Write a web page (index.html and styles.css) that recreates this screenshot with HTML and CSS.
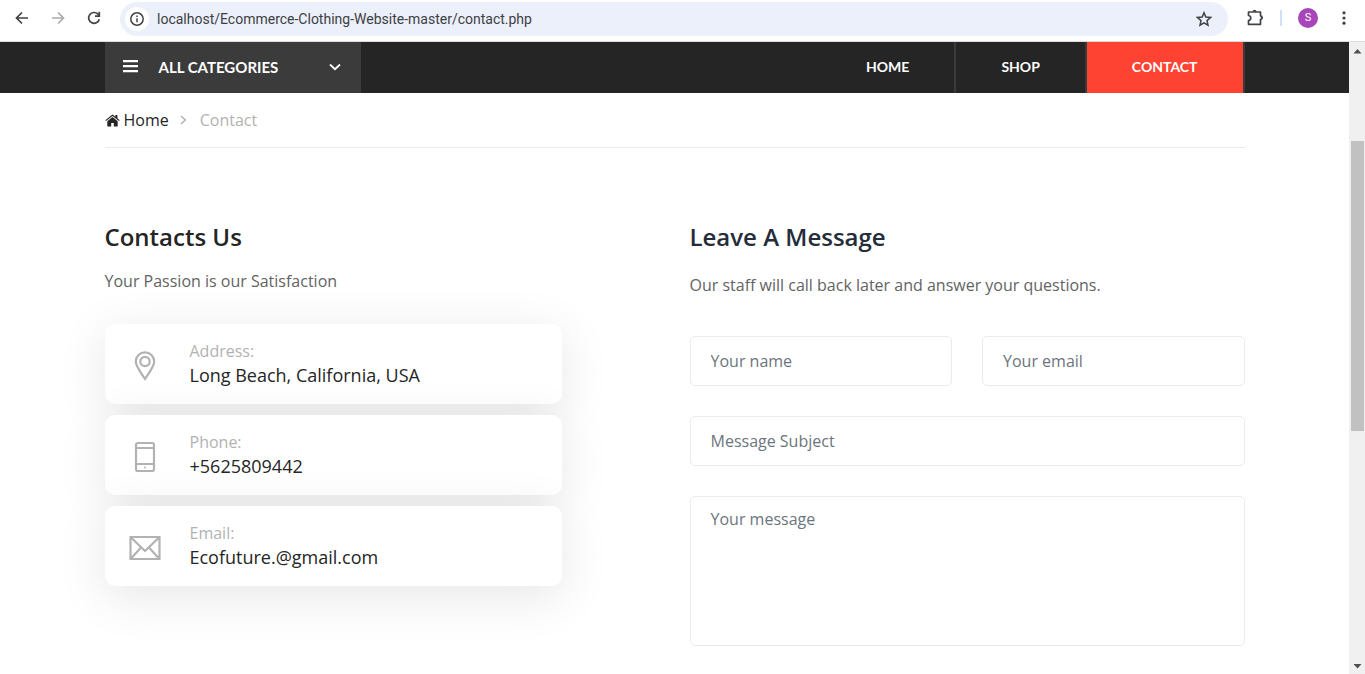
FILE: index.html
```html
<!DOCTYPE html>
<html lang="en">
<head>
<meta charset="utf-8">
<meta name="viewport" content="width=device-width, initial-scale=1">
<title>Contact</title>
<link rel="stylesheet" href="styles.css">
</head>
<body>
<div class="toolbar">
  <button class="tool back" type="button" aria-label="Back"><svg width="16" height="16" viewBox="0 0 16 16" fill="none" stroke="#404346" stroke-width="1.7"><path d="M14 8H3M8 2.5 2.5 8 8 13.5"/></svg></button>
  <button class="tool" type="button" aria-label="Forward"><svg width="16" height="16" viewBox="0 0 16 16" fill="none" stroke="#a9abae" stroke-width="1.7"><path d="M2 8h11M8 2.5 13.500 8 8 13.500"/></svg></button>
  <button class="tool" type="button" aria-label="Reload"><svg width="16" height="16" viewBox="0 0 16 16" fill="none" stroke="#404346" stroke-width="1.7"><path d="M13.300 9.200a5.400 5.400 0 1 1-1.300-5L13 5.300"/><path d="M13.300 1.800v4.300H9"/></svg></button>
  <div class="omnibox">
    <button class="site-info" type="button" aria-label="Site information"><svg width="16" height="16" viewBox="0 0 16 16" fill="none" stroke="#404346" stroke-width="1.5"><circle cx="8" cy="8" r="6.200"/><path d="M8 7.200v4M8 4.600v1.500"/></svg></button>
    <input class="url" type="text" aria-label="Address bar" value="localhost/Ecommerce-Clothing-Website-master/contact.php">
    <button class="tool star" type="button" aria-label="Bookmark"><svg width="16" height="16" viewBox="0 0 16 16" fill="none" stroke="#404346" stroke-width="1.5"><path d="m8 1.800 1.800 4.300 4.700.4-3.500 3.100 1 4.600L8 11.800l-4 2.400 1-4.600L1.500 6.500l4.700-.4z"/></svg></button>
  </div>
  <button class="tool puzzle" type="button" aria-label="Extensions"><svg width="18" height="18" viewBox="0 0 18 18"><path d="M2.500 3h12v3.800c2.200.3 2.200 3.400 0 3.700v4.800h-12v-3.600c3-.5 3-4.700 0-5.200z" fill="none" stroke="#404346" stroke-width="1.700" stroke-linejoin="round"/><path d="M6.700 2.700a1.900 1.900 0 0 1 3.800 0zM14.800 6.900a1.800 1.800 0 0 1 0 3.500z" fill="#404346"/></svg></button>
  <span class="divider"></span>
  <button class="avatar" type="button" aria-label="Profile">S</button>
  <button class="tool more" type="button" aria-label="Menu"><svg width="16" height="16" viewBox="0 0 16 16" fill="#404346"><circle cx="8" cy="2.800" r="1.600"/><circle cx="8" cy="8" r="1.600"/><circle cx="8" cy="13.200" r="1.600"/></svg></button>
</div>
<div class="viewport">
  <div class="page">
    <header class="nav">
      <div class="container nav-row">
        <button class="categories" type="button">
          <svg width="16" height="13" viewBox="0 0 16 13" fill="#fff"><path d="M0 0h15v2.300H0zM0 5h15v2.300H0zM0 10h15v2.300H0z"/></svg>
          <span class="cat-label">All categories</span>
          <svg width="12" height="8" viewBox="0 0 12 8" fill="none" stroke="#fff" stroke-width="1.800"><path d="m1 1.500 5 4.700 5-4.700"/></svg>
        </button>
        <nav class="menu">
          <a class="link" href="#">Home</a>
          <a class="link" href="#">Shop</a>
          <a class="link active" href="#">Contact</a>
        </nav>
      </div>
    </header>
    <div class="container">
      <div class="crumbs">
        <a class="crumb-home" href="#"><svg width="15" height="13" viewBox="0 0 15 13" fill="#252525"><path d="M7.500 3 2.300 7.300V12c0 .4.200.6.600.6h3.300V9h2.600v3.600h3.300c.4 0 .600-.2.600-.6V7.300z"/><path d="m.3 6.300 6.500-5.400a1.100 1.100 0 0 1 1.400 0l2.200 1.800V1h2v3.300l2.300 2-.7.800L7.500 1.900 1 7.100z"/></svg>Home</a>
        <svg width="7" height="10" viewBox="0 0 7 10" fill="none" stroke="#b2b2b2" stroke-width="1.500"><path d="m1 1 4.300 4L1 9"/></svg>
        <span>Contact</span>
      </div>
    </div>
    <main class="container columns">
      <section class="contacts">
        <h1 class="title">Contacts Us</h1>
        <p class="lead">Your Passion is our Satisfaction</p>
        <div class="cards">
          <div class="card">
            <svg width="32" height="32" viewBox="0 0 32 32" fill="none" stroke="#b2b2b2" stroke-width="2.200"><path d="M16 29C12.500 23.300 6.800 16.800 6.800 11.500a9.200 9.200 0 0 1 18.400 0c0 5.300-5.700 11.800-9.200 17.500z"/><circle cx="16" cy="11.500" r="4.700"/></svg>
            <div class="card-text"><span class="label">Address:</span><p class="value">Long Beach, California, USA</p></div>
          </div>
          <div class="card">
            <svg width="32" height="32" viewBox="0 0 32 32" fill="none" stroke="#b2b2b2" stroke-width="2.200"><rect x="7" y="2" width="18" height="28" rx="2"/><path d="M7 7h18M7 23h18"/><circle cx="16" cy="26.500" r="1" fill="#b2b2b2" stroke="none"/></svg>
            <div class="card-text"><span class="label">Phone:</span><p class="value">+5625809442</p></div>
          </div>
          <div class="card">
            <svg width="32" height="32" viewBox="0 0 32 32" fill="none" stroke="#b2b2b2" stroke-width="2.200"><path d="M1.500 5h29v22h-29zM2 5.500l14 13.500L30 5.500M2 26.500 12 15.500M30 26.500 20 15.500"/></svg>
            <div class="card-text"><span class="label">Email:</span><p class="value">Ecofuture.@gmail.com</p></div>
          </div>
        </div>
      </section>
      <section class="message">
        <h2 class="title navy">Leave A Message</h2>
        <p class="lead low">Our staff will call back later and answer your questions.</p>
        <form class="form">
          <input class="field" type="text" aria-label="Your name" placeholder="Your name">
          <input class="field" type="email" aria-label="Your email" placeholder="Your email">
          <input class="field wide" type="text" aria-label="Message Subject" placeholder="Message Subject">
          <textarea class="field wide area" aria-label="Your message" placeholder="Your message"></textarea>
        </form>
      </section>
    </main>
  </div>
  <div class="scrollbar" aria-hidden="true">
    <svg width="9" height="5" viewBox="0 0 9 5" fill="#505050"><path d="M4.500 0 8.500 4.500h-8z"/></svg>
    <div class="track"><div class="thumb"></div></div>
    <svg width="9" height="5" viewBox="0 0 9 5" fill="#505050"><path d="M.5 0h8l-4 4.500z"/></svg>
  </div>
</div>
</body>
</html>
```
FILE: styles.css
```css
* { box-sizing: border-box; }
body {
  margin: 0;
  min-height: 100vh;
  display: flex;
  flex-direction: column;
  background: #fff;
  color: #252525;
  font: 16px/26px "Open Sans", sans-serif;
}
h1, h2, p { margin: 0; }
a { color: inherit; text-decoration: none; }
svg { display: block; flex: none; }
button { border: 0; padding: 0; background: none; font: inherit; color: inherit; cursor: pointer; }

/* Browser toolbar */
.toolbar {
  display: flex;
  align-items: center;
  height: 42px;
  padding: 0 13px 5px;
  border-bottom: 1px solid #dadce0;
}
.toolbar .tool { width: 16px; margin-right: 20px; }
.toolbar .back { margin-left: 1px; }
.omnibox {
  flex: 1;
  display: flex;
  align-items: center;
  height: 34px;
  margin: 1px 18px 0 -2px;
  padding: 0 16px 0 5px;
  border-radius: 17px;
  background: #ecf0fa;
}
.site-info {
  display: grid;
  place-items: center;
  width: 24px;
  height: 24px;
  border-radius: 50%;
  background: #fff;
}
.url {
  flex: 1;
  min-width: 0;
  margin-left: 8px;
  padding: 0;
  border: 0;
  outline: 0;
  background: none;
  color: #3c4043;
  font: 14px/20px Roboto, sans-serif;
}
.toolbar .star { margin-right: 0; }
.toolbar .puzzle { width: 18px; margin-right: 16px; }
.divider { width: 2px; height: 16px; background: #d0e0fb; }
.avatar {
  width: 20px;
  height: 20px;
  margin: 0 18px 0 16px;
  border-radius: 50%;
  background: #a846b9;
  color: #fff;
  font: 11px/20px Roboto, sans-serif;
}
.toolbar .more { margin-right: 0; }

.viewport { flex: 1; display: flex; }
.page { flex: 1; min-width: 0; }
.container { max-width: 1170px; margin: 0 auto; padding: 0 15px; }

/* Navigation */
.nav { background: #252525; color: #fff; }
.nav-row { display: flex; justify-content: space-between; }
.categories {
  display: flex;
  align-items: center;
  width: 256px;
  height: 51px;
  padding: 0 20px 2px 18px;
  background: #3b3b3b;
}
.cat-label {
  flex: 1;
  margin-left: 20px;
  text-align: left;
  text-transform: uppercase;
  font: 700 15px/26px Lato, sans-serif;
}
.menu { display: flex; }
.link {
  padding: 0 45px 2px;
  border-right: 2px solid #3b3b3b;
  text-transform: uppercase;
  font: 700 14px/49px Lato, sans-serif;
}
.active { background: #ff4332; }

.crumbs {
  display: flex;
  align-items: center;
  padding: 14px 0;
  border-bottom: 1px solid #ebebeb;
  color: #b2b2b2;
}
.crumbs svg { margin-right: 13px; }
.crumb-home { display: flex; align-items: center; margin-right: 11px; color: #252525; }
.crumb-home svg { margin-right: 4px; }

/* Contact section */
.columns {
  display: grid;
  grid-template-columns: repeat(12, minmax(0, 1fr));
  column-gap: 30px;
  padding-top: 74px;
  padding-bottom: 28px;
}
.contacts { grid-column: 1 / span 5; }
.message { grid-column: 7 / span 6; }
.title { font-size: 24px; line-height: 30px; font-weight: 600; }
.navy { color: #252c3a; }
.lead { margin-top: 16px; color: #636363; }
.low { margin-top: 20px; }
.cards { display: grid; gap: 11px; margin-top: 30px; }
.card {
  display: flex;
  align-items: center;
  gap: 29px;
  height: 80px;
  padding: 0 24px;
  border-radius: 10px;
  background: #fff;
  box-shadow: 0 10px 50px rgba(0, 0, 0, 0.1);
}
.card svg { margin-top: 4px; }
.card-text { padding-bottom: 2px; }
.label { display: block; line-height: 24px; color: #b2b2b2; }
.value { font-size: 18px; line-height: 24px; }

.form {
  display: grid;
  grid-template-columns: 1fr 1fr;
  gap: 30px;
  margin-top: 38px;
}
.field {
  width: 100%;
  height: 50px;
  padding: 0 20px;
  border: 1px solid #ebebeb;
  border-radius: 5px;
  background: #fff;
  color: #252525;
  font: inherit;
}
.field::placeholder { color: #6c757d; opacity: 1; }
.wide { grid-column: 1 / -1; }
.area { display: block; height: 150px; padding-top: 9px; resize: none; }

/* Scroll track */
.scrollbar {
  display: flex;
  flex-direction: column;
  align-items: center;
  width: 16px;
  padding: 7px 0 5px;
  background: #f0f0f0;
}
.track { flex: 1; width: 100%; padding: 87px 1px 0 2px; }
.thumb { height: 290px; background: #c1c1c1; }
```
